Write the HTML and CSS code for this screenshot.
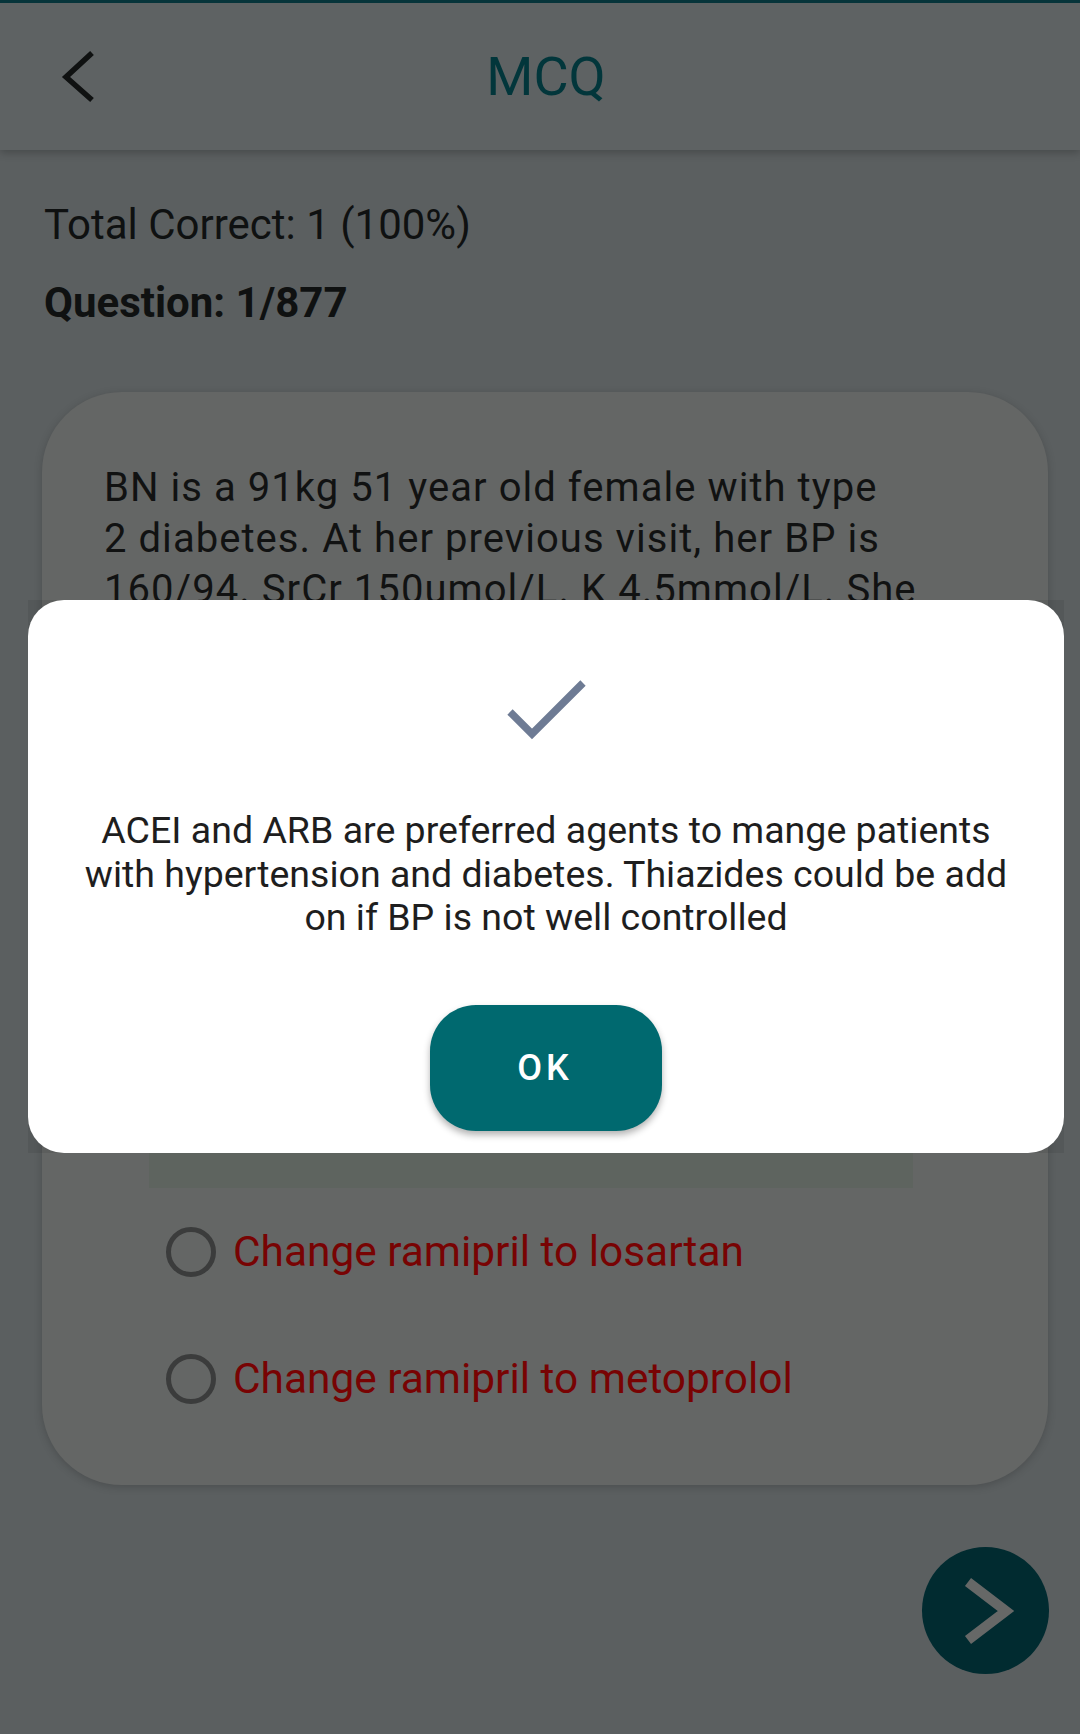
FILE: index.html
```html
<!DOCTYPE html>
<html lang="en">
<head>
<meta charset="utf-8">
<title>MCQ</title>
<link rel="stylesheet" href="styles.css">
</head>
<body>
<div class="screen">
  <header class="appbar">
    <button class="back" aria-label="Back">
      <svg class="back-icon" width="40" height="60" viewBox="0 0 40 60"><polyline points="32,6 6,30 32,53" fill="none" stroke="#0f1111" stroke-width="5.5" stroke-linejoin="miter" stroke-linecap="butt"/></svg>
    </button>
    <h1 class="title">MCQ</h1>
    <span class="spacer"></span>
  </header>

  <section class="stats">
    <p class="total">Total Correct: 1 (100%)</p>
    <p class="qnum">Question: 1/877</p>
  </section>

  <article class="card">
    <p class="question">BN is a 91kg 51 year old female with type<br>2 diabetes. At her previous visit, her BP is<br>160/94. SrCr 150umol/L. K 4.5mmol/L. She</p>
    <ul class="options">
      <li class="option correct"></li>
      <li class="option"><span class="radio"></span><span class="opt-text">Change ramipril to losartan</span></li>
      <li class="option"><span class="radio"></span><span class="opt-text">Change ramipril to metoprolol</span></li>
    </ul>
  </article>

  <button class="fab" aria-label="Next">
    <svg width="127" height="127" viewBox="0 0 127 127"><polyline points="46,35 84,64 46,93" fill="none" stroke="#666867" stroke-width="10" stroke-linejoin="miter" stroke-linecap="butt"/></svg>
  </button>

  <div class="dialog-window">
    <div class="dialog">
      <svg class="check" width="92" height="70" viewBox="0 0 92 70"><polyline points="10,38 32,60 83,9" fill="none" stroke="#6e7b94" stroke-width="7.5" stroke-linejoin="miter" stroke-linecap="butt"/></svg>
      <p class="message">ACEI and ARB are preferred agents to mange patients with hypertension and diabetes. Thiazides could be add on if BP is not well controlled</p>
      <button class="ok">OK</button>
    </div>
  </div>
</div>
</body>
</html>
```
FILE: styles.css
```css
* { box-sizing: border-box; }
html, body { margin: 0; padding: 0; }
body {
  width: 1080px;
  height: 1734px;
  background: #5b5f60;
  font-family: Roboto, "Noto Sans", "Liberation Sans", sans-serif;
  overflow: hidden;
}
.screen {
  position: relative;
  width: 1080px;
  height: 1734px;
}
p { margin: 0; }

.appbar {
  height: 150px;
  border-top: 3px solid #06343a;
  background: #5e6263;
  display: grid;
  grid-template-columns: 150px 1fr 138px;
  align-items: center;
  box-shadow: 0 3px 8px rgba(0, 0, 0, 0.22);
  position: relative;
  z-index: 1;
}
.back {
  background: none;
  border: 0;
  padding: 0 0 0 60px;
  height: 60px;
  display: flex;
  align-items: center;
  cursor: pointer;
}
.back-icon { display: block; }
.title {
  margin: 0;
  text-align: center;
  font-weight: 400;
  font-size: 54px;
  line-height: 60px;
  color: #02363b;
}

.stats {
  padding: 50px 0 0 44px;
  color: #0f1111;
}
.total {
  font-size: 42px;
  line-height: 50px;
}
.qnum {
  margin-top: 28px;
  font-size: 42px;
  line-height: 50px;
  font-weight: 700;
}

.card {
  margin: 64px 32px 0 42px;
  background: #646665;
  border-radius: 80px;
  padding: 70px 40px 43px 62px;
  box-shadow: 0 2px 8px rgba(0, 0, 0, 0.18);
}
.question {
  min-height: 599px;
  font-size: 40px;
  line-height: 51px;
  letter-spacing: 1.05px;
  white-space: nowrap;
  color: #111212;
}
.options {
  list-style: none;
  margin: 0 95px 0 45px;
  padding: 0;
}
.option {
  height: 127px;
  display: flex;
  align-items: center;
  padding-left: 17px;
}
.option.correct {
  background: #5e645f;
}
.radio {
  width: 50px;
  height: 50px;
  border: 5px solid #3b3c3c;
  border-radius: 50%;
  flex: none;
}
.opt-text {
  margin-left: 17px;
  font-size: 42.4px;
  color: #780303;
}

.fab {
  position: absolute;
  left: 922px;
  top: 1547px;
  width: 127px;
  height: 127px;
  border-radius: 50%;
  border: 0;
  padding: 0;
  background: #012b30;
  display: block;
}
.fab svg { display: block; }

.dialog-window {
  position: absolute;
  left: 28px;
  top: 600px;
  width: 1036px;
  height: 553px;
  background: rgba(0, 0, 0, 0.07);
  z-index: 5;
}
.dialog {
  height: 100%;
  background: #ffffff;
  border-radius: 36px;
  display: flex;
  flex-direction: column;
  align-items: center;
  padding: 74px 48px 0;
}
.check { display: block; flex: none; }
.message {
  margin-top: 65px;
  font-size: 37.5px;
  line-height: 43.5px;
  text-align: center;
  color: #1e1e1e;
}
.ok {
  margin-top: 65px;
  width: 232px;
  height: 126px;
  border: 0;
  border-radius: 46px;
  background: #00696f;
  color: #ffffff;
  font-family: Roboto, "Noto Sans", sans-serif;
  font-weight: 500;
  font-size: 36px;
  letter-spacing: 4px;
  padding-left: 4px;
  box-shadow: 0 4px 7px rgba(0, 0, 0, 0.3);
  flex: none;
}
```
